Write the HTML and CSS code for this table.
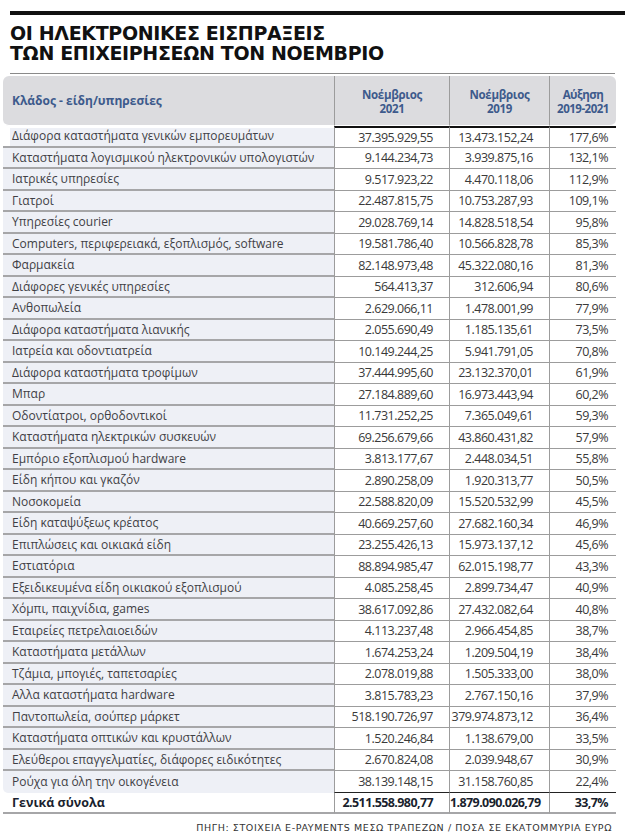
FILE: index.html
```html
<!DOCTYPE html>
<html lang="el">
<head>
<meta charset="utf-8">
<title>Οι ηλεκτρονικές εισπράξεις των επιχειρήσεων τον Νοέμβριο</title>
<link rel="stylesheet" href="styles.css">
</head>
<body>
<div class="page">
  <div class="topbar"></div>
  <h1 class="title">ΟΙ ΗΛΕΚΤΡΟΝΙΚΕΣ ΕΙΣΠΡΑΞΕΙΣ<br>ΤΩΝ ΕΠΙΧΕΙΡΗΣΕΩΝ ΤΟΝ ΝΟΕΜΒΡΙΟ</h1>
  <div class="title-rule"></div>
  <table class="data">
    <colgroup>
      <col class="c-label"><col class="c-n1"><col class="c-n2"><col class="c-pct">
    </colgroup>
    <thead>
      <tr>
        <th class="h-label">Κλάδος - είδη/υπηρεσίες</th>
        <th class="h-num"><span class="hl">Νοέμβριος</span><span class="hl">2021</span></th>
        <th class="h-num"><span class="hl">Νοέμβριος</span><span class="hl">2019</span></th>
        <th class="h-num h-last"><span class="hl">Αύξηση</span><span class="hl">2019-2021</span></th>
      </tr>
    </thead>
    <tbody>
      <tr class="first"><td class="lbl">Διάφορα καταστήματα γενικών εμπορευμάτων</td><td class="num">37.395.929,55</td><td class="num">13.473.152,24</td><td class="num pct">177,6%</td></tr>
      <tr><td class="lbl">Καταστήματα λογισμικού ηλεκτρονικών υπολογιστών</td><td class="num">9.144.234,73</td><td class="num">3.939.875,16</td><td class="num pct">132,1%</td></tr>
      <tr><td class="lbl">Ιατρικές υπηρεσίες</td><td class="num">9.517.923,22</td><td class="num">4.470.118,06</td><td class="num pct">112,9%</td></tr>
      <tr><td class="lbl">Γιατροί</td><td class="num">22.487.815,75</td><td class="num">10.753.287,93</td><td class="num pct">109,1%</td></tr>
      <tr><td class="lbl">Υπηρεσίες courier</td><td class="num">29.028.769,14</td><td class="num">14.828.518,54</td><td class="num pct">95,8%</td></tr>
      <tr><td class="lbl">Computers, περιφερειακά, εξοπλισμός, software</td><td class="num">19.581.786,40</td><td class="num">10.566.828,78</td><td class="num pct">85,3%</td></tr>
      <tr><td class="lbl">Φαρμακεία</td><td class="num">82.148.973,48</td><td class="num">45.322.080,16</td><td class="num pct">81,3%</td></tr>
      <tr><td class="lbl">Διάφορες γενικές υπηρεσίες</td><td class="num">564.413,37</td><td class="num">312.606,94</td><td class="num pct">80,6%</td></tr>
      <tr><td class="lbl">Ανθοπωλεία</td><td class="num">2.629.066,11</td><td class="num">1.478.001,99</td><td class="num pct">77,9%</td></tr>
      <tr><td class="lbl">Διάφορα καταστήματα λιανικής</td><td class="num">2.055.690,49</td><td class="num">1.185.135,61</td><td class="num pct">73,5%</td></tr>
      <tr><td class="lbl">Ιατρεία και οδοντιατρεία</td><td class="num">10.149.244,25</td><td class="num">5.941.791,05</td><td class="num pct">70,8%</td></tr>
      <tr><td class="lbl">Διάφορα καταστήματα τροφίμων</td><td class="num">37.444.995,60</td><td class="num">23.132.370,01</td><td class="num pct">61,9%</td></tr>
      <tr><td class="lbl">Μπαρ</td><td class="num">27.184.889,60</td><td class="num">16.973.443,94</td><td class="num pct">60,2%</td></tr>
      <tr><td class="lbl">Οδοντίατροι, ορθοδοντικοί</td><td class="num">11.731.252,25</td><td class="num">7.365.049,61</td><td class="num pct">59,3%</td></tr>
      <tr><td class="lbl">Καταστήματα ηλεκτρικών συσκευών</td><td class="num">69.256.679,66</td><td class="num">43.860.431,82</td><td class="num pct">57,9%</td></tr>
      <tr><td class="lbl">Εμπόριο εξοπλισμού hardware</td><td class="num">3.813.177,67</td><td class="num">2.448.034,51</td><td class="num pct">55,8%</td></tr>
      <tr><td class="lbl">Είδη κήπου και γκαζόν</td><td class="num">2.890.258,09</td><td class="num">1.920.313,77</td><td class="num pct">50,5%</td></tr>
      <tr><td class="lbl">Νοσοκομεία</td><td class="num">22.588.820,09</td><td class="num">15.520.532,99</td><td class="num pct">45,5%</td></tr>
      <tr><td class="lbl">Είδη καταψύξεως κρέατος</td><td class="num">40.669.257,60</td><td class="num">27.682.160,34</td><td class="num pct">46,9%</td></tr>
      <tr><td class="lbl">Επιπλώσεις και οικιακά είδη</td><td class="num">23.255.426,13</td><td class="num">15.973.137,12</td><td class="num pct">45,6%</td></tr>
      <tr><td class="lbl">Εστιατόρια</td><td class="num">88.894.985,47</td><td class="num">62.015.198,77</td><td class="num pct">43,3%</td></tr>
      <tr><td class="lbl">Εξειδικευμένα είδη οικιακού εξοπλισμού</td><td class="num">4.085.258,45</td><td class="num">2.899.734,47</td><td class="num pct">40,9%</td></tr>
      <tr><td class="lbl">Χόμπι, παιχνίδια, games</td><td class="num">38.617.092,86</td><td class="num">27.432.082,64</td><td class="num pct">40,8%</td></tr>
      <tr><td class="lbl">Εταιρείες πετρελαιοειδών</td><td class="num">4.113.237,48</td><td class="num">2.966.454,85</td><td class="num pct">38,7%</td></tr>
      <tr><td class="lbl">Καταστήματα μετάλλων</td><td class="num">1.674.253,24</td><td class="num">1.209.504,19</td><td class="num pct">38,4%</td></tr>
      <tr><td class="lbl">Τζάμια, μπογιές, ταπετσαρίες</td><td class="num">2.078.019,88</td><td class="num">1.505.333,00</td><td class="num pct">38,0%</td></tr>
      <tr><td class="lbl">Αλλα καταστήματα hardware</td><td class="num">3.815.783,23</td><td class="num">2.767.150,16</td><td class="num pct">37,9%</td></tr>
      <tr><td class="lbl">Παντοπωλεία, σούπερ μάρκετ</td><td class="num">518.190.726,97</td><td class="num">379.974.873,12</td><td class="num pct">36,4%</td></tr>
      <tr><td class="lbl">Καταστήματα οπτικών και κρυστάλλων</td><td class="num">1.520.246,84</td><td class="num">1.138.679,00</td><td class="num pct">33,5%</td></tr>
      <tr><td class="lbl">Ελεύθεροι επαγγελματίες, διάφορες ειδικότητες</td><td class="num">2.670.824,08</td><td class="num">2.039.948,67</td><td class="num pct">30,9%</td></tr>
      <tr class="last"><td class="lbl">Ρούχα για όλη την οικογένεια</td><td class="num">38.139.148,15</td><td class="num">31.158.760,85</td><td class="num pct">22,4%</td></tr>
      <tr class="total"><td class="lbl">Γενικά σύνολα</td><td class="num">2.511.558.980,77</td><td class="num">1.879.090.026,79</td><td class="num pct">33,7%</td></tr>
    </tbody>
  </table>
  <p class="source">ΠΗΓΗ: ΣΤΟΙΧΕΙΑ E-PAYMENTS ΜΕΣΩ ΤΡΑΠΕΖΩΝ / ΠΟΣΑ ΣΕ ΕΚΑΤΟΜΜΥΡΙΑ ΕΥΡΩ</p>
</div>
</body>
</html>
```

FILE: styles.css
```css
html, body {
  margin: 0;
  padding: 0;
  background: #ffffff;
}

.page {
  width: 635px;
  padding-top: 11px;
  font-family: "Open Sans", "Noto Sans", sans-serif;
  color: #3a3a3a;
}

.topbar {
  margin-left: 10px;
  width: 615px;
  height: 4px;
  background: #111111;
}

.title {
  margin: 8px 0 0 10px;
  font-family: "DejaVu Sans", "Liberation Sans", sans-serif;
  font-weight: bold;
  font-size: 19px;
  line-height: 20px;
  color: #111111;
  letter-spacing: -0.35px;
}

.title-rule {
  margin: 10px 20px 0 10px;
  height: 1px;
  background: #8a8a8a;
}

.data {
  margin: 2px 0 0 3px;
  border-collapse: separate;
  border-spacing: 0;
  table-layout: fixed;
  width: 613px;
}

.c-label { width: 331px; }
.c-n1 { width: 115px; }
.c-n2 { width: 100px; }
.c-pct { width: 67px; }

.data th {
  background: #dcdcdf;
  color: #3d5a8c;
  font-weight: 700;
  font-size: 12px;
  height: 47px;
  padding: 0;
  vertical-align: middle;
  border-bottom: 1px solid #ffffff;
  white-space: nowrap;
}

.hl {
  display: block;
  font-size: 11.5px;
  line-height: 13.5px;
}

.data th.h-label {
  text-align: left;
  padding-left: 9px;
  border-radius: 6px 0 0 6px;
}

.data th.h-num {
  text-align: center;
  border-left: 1px solid #9c9c9c;
  padding-top: 2px;
  letter-spacing: -0.3px;
}

.data th.h-last {
  border-radius: 0 6px 6px 0;
  letter-spacing: -0.5px;
}

.data tbody tr.first td {
  border-top: 2px solid #111111;
}

.data tbody tr.first td.lbl {
  border-top: 0;
  box-shadow: inset 7px 2px 0 #ffffff, inset 0 2px 0 #111111;
}

.data td {
  height: 21.5px;
  padding: 0;
  box-sizing: border-box;
  vertical-align: middle;
  white-space: nowrap;
}

.data td.lbl {
  background: #eef0f6;
  padding-left: 9px;
  font-size: 12px;
  color: #3f3f45;
  border-bottom: 2px solid #a6a6a8;
}

.data td.num {
  text-align: right;
  padding-right: 16px;
  font-size: 12.5px;
  letter-spacing: -0.5px;
  color: #3a3a3a;
  border-left: 1px solid #9c9c9c;
  border-bottom: 1px solid #9c9c9c;
}

.data td.pct {
  padding-right: 8px;
}

.data tr.last td.lbl {
  border-bottom-left-radius: 5px;
  border-bottom: 0;
}

.data tr.last td {
  border-bottom: 1px solid #222222;
}

.data tr.total td {
  font-weight: 700;
  color: #1a1f2e;
  border-bottom: 2px solid #a6a6a8;
}

.data tr.total td.lbl {
  background: #ffffff;
  font-size: 12.5px;
}

.data tr.total td.num {
  letter-spacing: -0.6px;
}

.source {
  margin: 8px 23px 0 0;
  text-align: right;
  font-family: "DejaVu Sans", sans-serif;
  font-size: 9.5px;
  letter-spacing: 0.6px;
  color: #333333;
}
```
